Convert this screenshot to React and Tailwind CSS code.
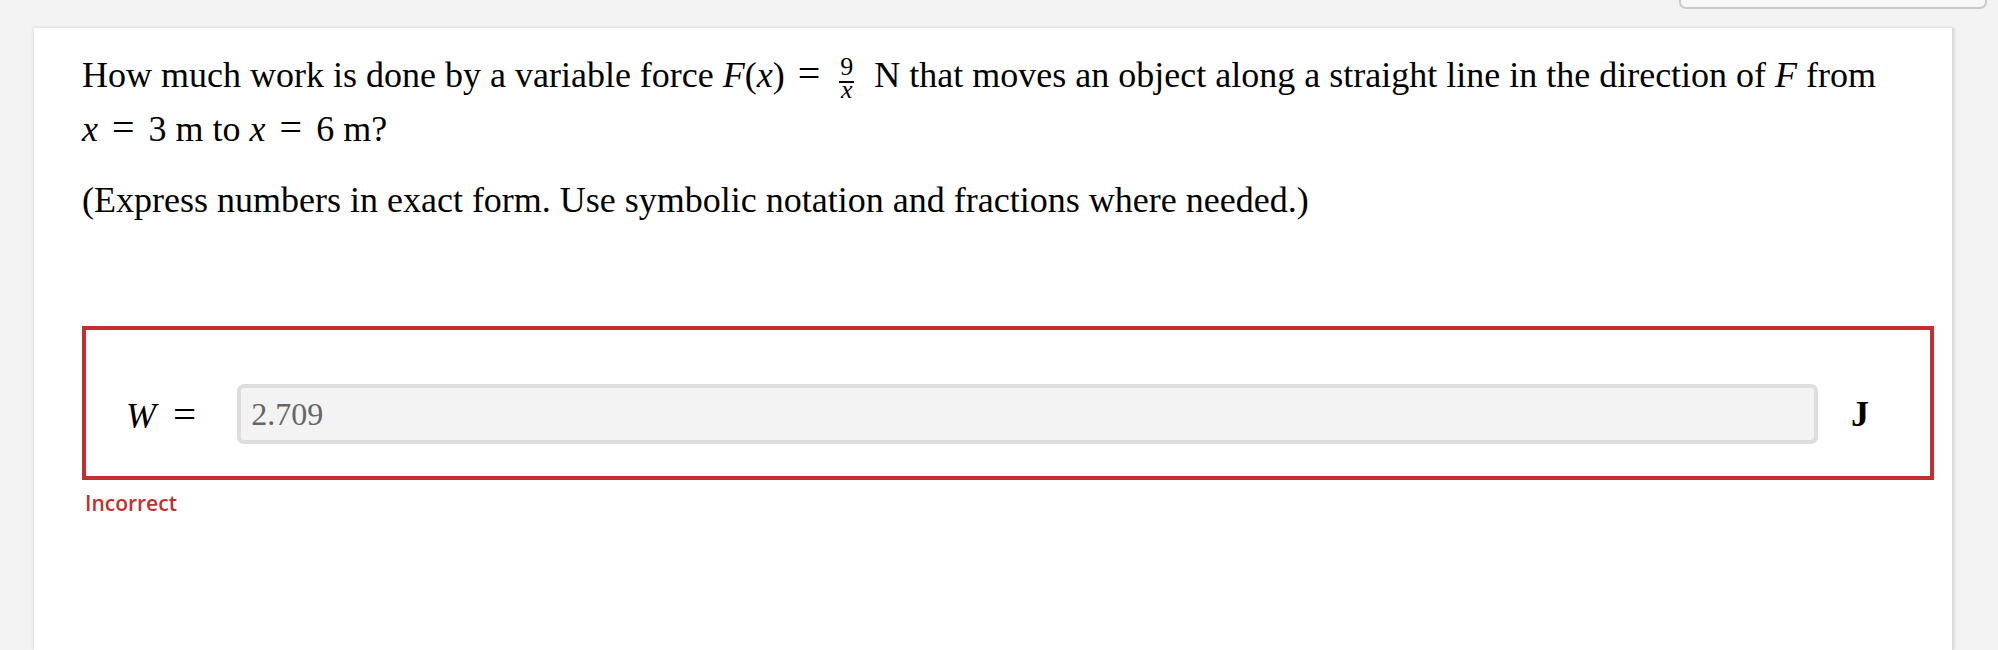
export default function App() {
  const serif = { fontFamily: '"Liberation Serif", "Times New Roman", serif' };

  return (
    <div className="relative min-h-[650px] overflow-hidden bg-[#f3f3f3]" style={serif}>
      {/* partially visible button at the top right */}
      <div className="absolute left-[1679px] top-[-3px] h-[12px] w-[308px] rounded-b-[7px] border-2 border-[#c9c9c9] bg-[#f7f7f7]"></div>

      <div className="ml-[34px] mt-[28px] min-h-[622px] w-[1920px] border-r-2 border-[#dcdcdc] bg-white pl-[48px] pr-[18px] pt-[20px] shadow-[0_0_4px_rgba(0,0,0,0.14)]">
        <p className="text-[36px] leading-[54px] text-black">
          How much work is done by a variable force{' '}
          <span className="whitespace-nowrap">
            <i>F</i>(<i>x</i>)<span className="mx-[13px] text-[40px] leading-none">=</span>
            <span className="ml-[6px] mr-[11px] inline-flex flex-col items-center align-[12px] text-[26px]">
              <span className="px-[1px] leading-[24px]">9</span>
              <span className="mt-[2px] h-[2px] w-full bg-black"></span>
              <i className="leading-[13px]">x</i>
            </span>
          </span>{' '}
          N that moves an object along a straight line in the direction of <i>F</i> from{' '}
          <span className="whitespace-nowrap">
            <i>x</i>
            <span className="mx-[14px] text-[40px] leading-none">=</span>3 m
          </span>{' '}
          to{' '}
          <span className="whitespace-nowrap">
            <i>x</i>
            <span className="mx-[14px] text-[40px] leading-none">=</span>6 m
          </span>
          ?
        </p>

        <p className="mt-[17px] text-[36px] leading-[54px] text-black">
          (Express numbers in exact form. Use symbolic notation and fractions where needed.)
        </p>

        <div className="mt-[99px] flex h-[154px] items-center border-4 border-[#c1302e] pb-[22px] pl-[40px] pr-[61px] pt-[44px]">
          <span className="text-[36px] leading-none text-black">
            <i>W</i>
            <span className="ml-[17px] text-[41px]">=</span>
          </span>
          <div className="ml-[41px] flex h-[60px] flex-1 items-center rounded-[7px] border-4 border-[#dddddd] bg-[#f3f3f3] pl-[10px] text-[32px] text-[#666666]">
            2.709
          </div>
          <span className="ml-[33px] text-[36px] font-bold leading-none text-black">J</span>
        </div>

        <div
          className="ml-[3px] mt-[9px] text-[21px] font-semibold leading-[28px] text-[#c1302e]"
          style={{ fontFamily: '"Open Sans", "Noto Sans", sans-serif' }}
        >
          Incorrect
        </div>
      </div>
    </div>
  );
}
